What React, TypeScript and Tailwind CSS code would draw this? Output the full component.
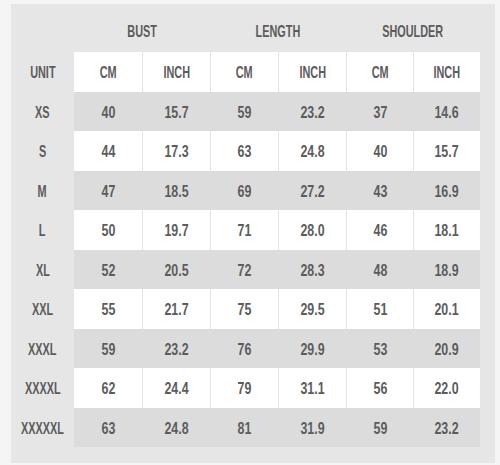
import React from "react";

const rows: string[][] = [
  ["XS", "40", "15.7", "59", "23.2", "37", "14.6"],
  ["S", "44", "17.3", "63", "24.8", "40", "15.7"],
  ["M", "47", "18.5", "69", "27.2", "43", "16.9"],
  ["L", "50", "19.7", "71", "28.0", "46", "18.1"],
  ["XL", "52", "20.5", "72", "28.3", "48", "18.9"],
  ["XXL", "55", "21.7", "75", "29.5", "51", "20.1"],
  ["XXXL", "59", "23.2", "76", "29.9", "53", "20.9"],
  ["XXXXL", "62", "24.4", "79", "31.1", "56", "22.0"],
  ["XXXXXL", "63", "24.8", "81", "31.9", "59", "23.2"],
];

const widths = ["w-[68px]", "w-[68px]", "w-[68px]", "w-[68px]", "w-[67px]", "w-[67px]"];

function Txt({ children, letters }: { children: React.ReactNode; letters?: boolean }) {
  return (
    <span
      className={
        "inline-block whitespace-nowrap pt-[2px] " + (letters ? "scale-x-[0.64]" : "scale-x-[0.73]")
      }
    >
      {children}
    </span>
  );
}

function Row({ cells, white, letters }: { cells: string[]; white: boolean; letters?: boolean }) {
  return (
    <div className="flex h-[39.5px]">
      <div className="flex w-[63px] items-center justify-center">
        <Txt letters>{cells[0]}</Txt>
      </div>
      {cells.slice(1).map((c, i) => (
        <div
          key={i}
          className={
            "flex items-center justify-center " +
            widths[i] +
            " " +
            (white ? "bg-white " : "bg-[#dcdcdc] ") +
            (i > 0 ? (white ? "border-l border-[#e3e3e3]" : "border-l border-[#dcdcdc]") : "")
          }
        >
          <Txt letters={letters}>{c}</Txt>
        </div>
      ))}
    </div>
  );
}

export default function App() {
  return (
    <div
      className="h-[465px] w-[500px] bg-[#f5f5f5] pl-[11px] pt-[4px] text-[17px] font-bold text-[#5c5c5c]"
      style={{ fontFamily: '"Liberation Sans", Arial, sans-serif' }}
    >
      <div className="h-[459px] w-[484px] bg-[#e6e6e6]">
        <div className="flex h-[48px] items-center pt-[5px]">
          <div className="w-[63px]" />
          <div className="w-[136px] text-center">
            <Txt letters>BUST</Txt>
          </div>
          <div className="w-[136px] text-center">
            <Txt letters>LENGTH</Txt>
          </div>
          <div className="w-[134px] text-center">
            <Txt letters>SHOULDER</Txt>
          </div>
        </div>
        <Row cells={["UNIT", "CM", "INCH", "CM", "INCH", "CM", "INCH"]} white letters />
        {rows.map((r, i) => (
          <Row key={r[0]} cells={r} white={i % 2 === 1} />
        ))}
      </div>
    </div>
  );
}
